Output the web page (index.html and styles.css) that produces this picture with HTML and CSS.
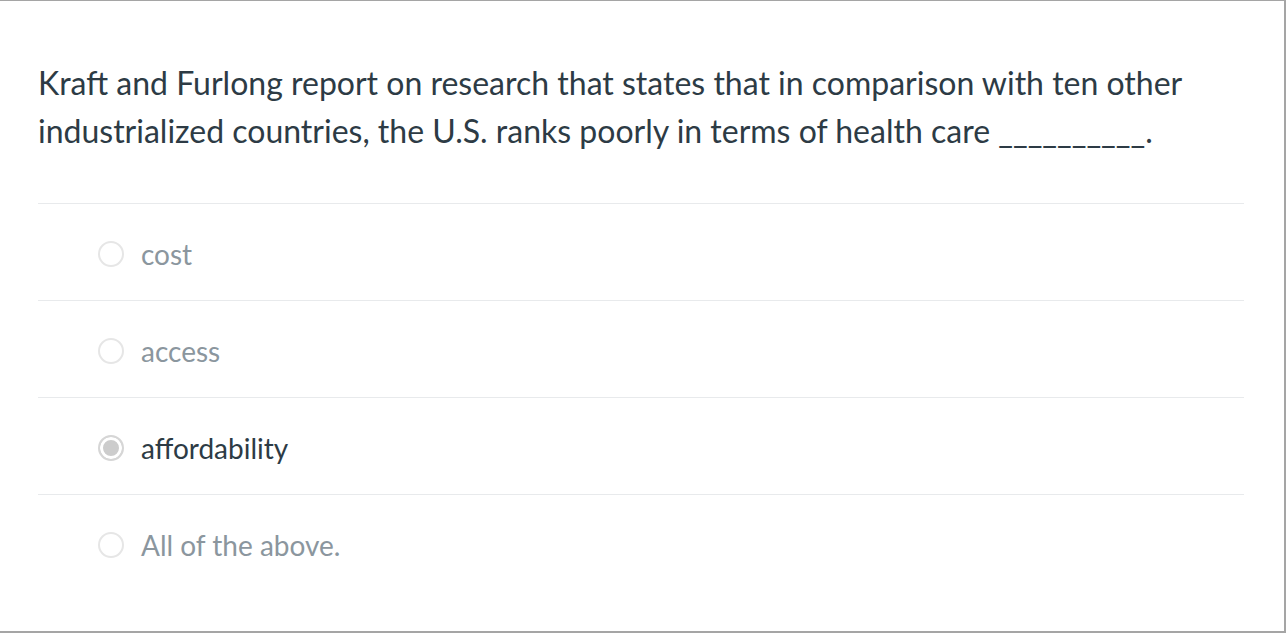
FILE: index.html
```html
<!DOCTYPE html>
<html>
<head>
<meta charset="utf-8">
<link rel="stylesheet" href="styles.css">
</head>
<body>
<div class="frame">
  <div class="question">
    <p class="question-text">Kraft and Furlong report on research that states that in comparison with ten other industrialized countries, the U.S. ranks poorly in terms of health care __________.</p>
    <div class="answers">
      <label class="answer">
        <span class="radio"></span>
        <span class="answer-text">cost</span>
      </label>
      <label class="answer">
        <span class="radio"></span>
        <span class="answer-text">access</span>
      </label>
      <label class="answer selected">
        <span class="radio"></span>
        <span class="answer-text">affordability</span>
      </label>
      <label class="answer">
        <span class="radio"></span>
        <span class="answer-text">All of the above.</span>
      </label>
    </div>
  </div>
</div>
</body>
</html>
```
FILE: styles.css
```css
html, body {
  margin: 0;
  padding: 0;
  background: #ffffff;
}
body {
  font-family: Lato, "Open Sans", sans-serif;
  color: #2d3b45;
}
.frame {
  width: 1284px;
  height: 630px;
  border-top: 1px solid #a5a5a5;
  border-right: 2px solid #a5a5a5;
  border-bottom: 2px solid #a5a5a5;
  box-sizing: content-box;
  overflow: hidden;
}
.question {
  padding: 0 40px 0 38px;
}
.question-text {
  margin: 0;
  padding-top: 58px;
  padding-bottom: 48px;
  font-size: 32px;
  line-height: 48px;
}
.answers {
  display: flex;
  flex-direction: column;
}
.answer {
  display: flex;
  align-items: center;
  box-sizing: border-box;
  height: 97px;
  padding-top: 4px;
  border-top: 1px solid #e8eaec;
  padding-left: 60px;
}
.radio {
  width: 22px;
  height: 22px;
  border: 2px solid #e6e6e6;
  border-radius: 50%;
  box-sizing: content-box;
  background: #fff;
  flex: none;
}
.answer.selected .radio {
  background: #cccccc;
  box-shadow: inset 0 0 0 3px #fff;
  border-color: #d6d6d6;
}
.answer-text {
  margin-left: 17px;
  font-size: 28px;
  color: #8b969e;
}
.answer.selected .answer-text {
  color: #2d3b45;
}
```
